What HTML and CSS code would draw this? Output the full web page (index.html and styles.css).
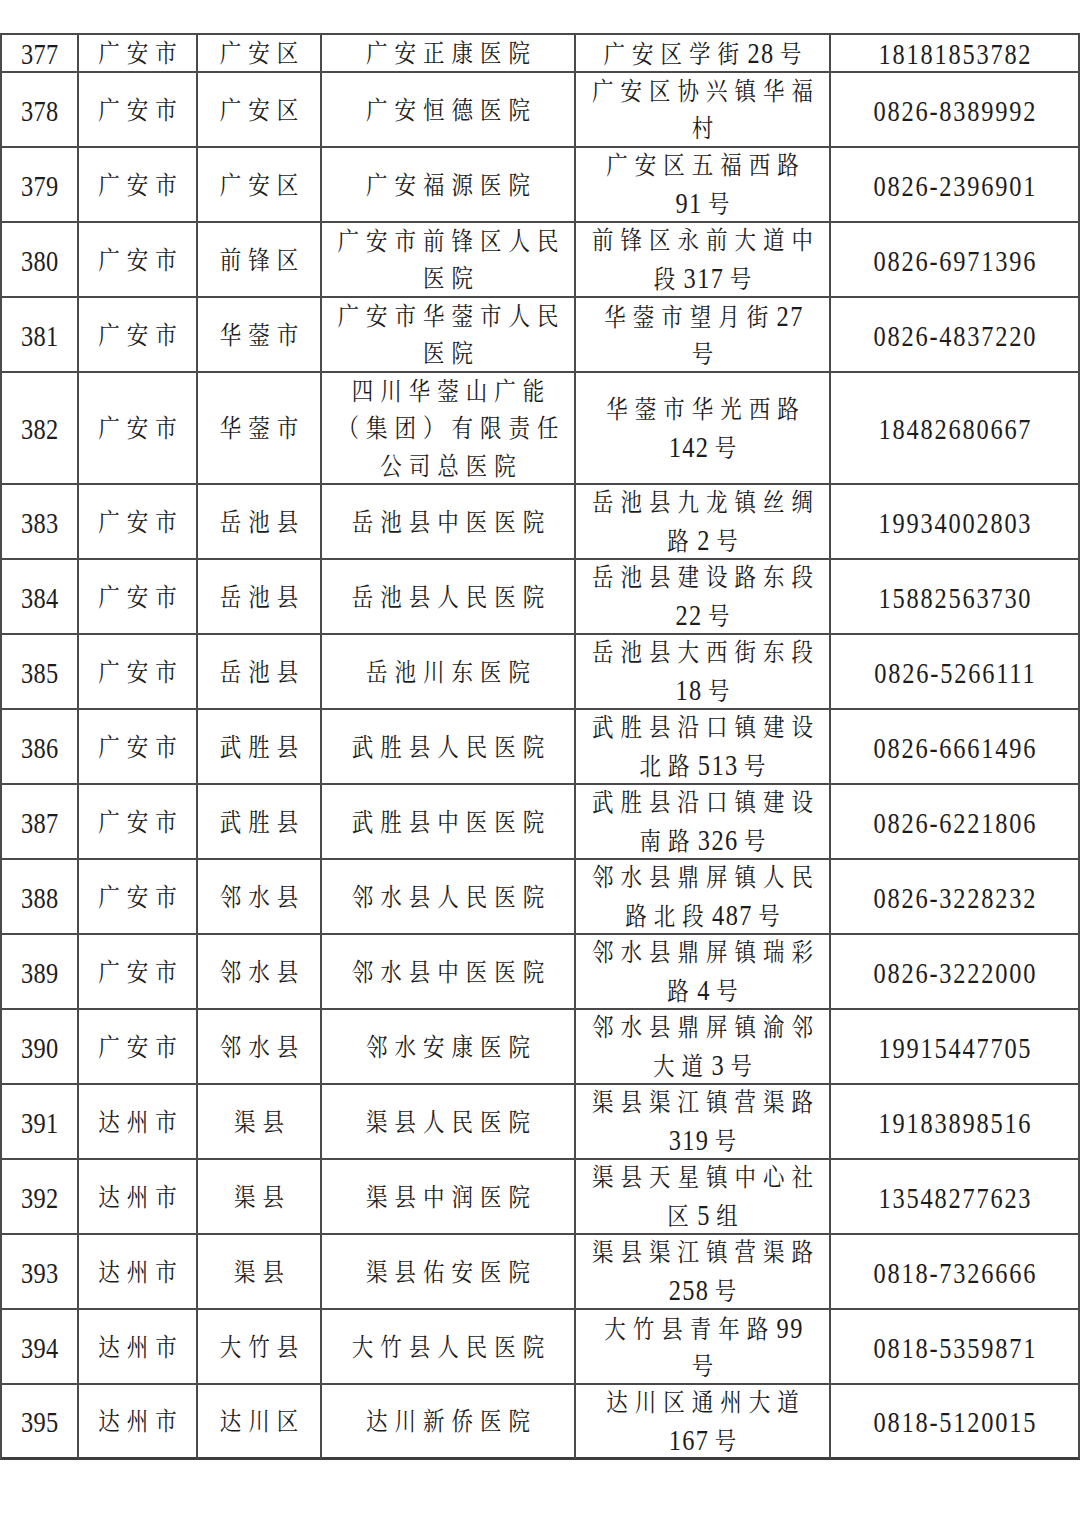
FILE: index.html
```html
<!DOCTYPE html>
<html lang="zh-CN">
<head>
<meta charset="utf-8">
<title>医院名单</title>
<link rel="stylesheet" href="styles.css">
</head>
<body>
<div class="table">
  <div class="row r1"><div class="c num"><p>377</p></div><div class="c"><p>广安市</p></div><div class="c"><p>广安区</p></div><div class="c"><p>广安正康医院</p></div><div class="c"><p>广安区学街 <span class="n">28</span> 号</p></div><div class="c tel"><p>18181853782</p></div></div>
  <div class="row"><div class="c num"><p>378</p></div><div class="c"><p>广安市</p></div><div class="c"><p>广安区</p></div><div class="c"><p>广安恒德医院</p></div><div class="c"><p>广安区协兴镇华福<br>村</p></div><div class="c tel"><p>0826-8389992</p></div></div>
  <div class="row"><div class="c num"><p>379</p></div><div class="c"><p>广安市</p></div><div class="c"><p>广安区</p></div><div class="c"><p>广安福源医院</p></div><div class="c"><p>广安区五福西路<br><span class="n">91</span> 号</p></div><div class="c tel"><p>0826-2396901</p></div></div>
  <div class="row"><div class="c num"><p>380</p></div><div class="c"><p>广安市</p></div><div class="c"><p>前锋区</p></div><div class="c"><p>广安市前锋区人民<br>医院</p></div><div class="c"><p>前锋区永前大道中<br>段 <span class="n">317</span> 号</p></div><div class="c tel"><p>0826-6971396</p></div></div>
  <div class="row"><div class="c num"><p>381</p></div><div class="c"><p>广安市</p></div><div class="c"><p>华蓥市</p></div><div class="c"><p>广安市华蓥市人民<br>医院</p></div><div class="c"><p>华蓥市望月街 <span class="n">27</span><br>号</p></div><div class="c tel"><p>0826-4837220</p></div></div>
  <div class="row r3"><div class="c num"><p>382</p></div><div class="c"><p>广安市</p></div><div class="c"><p>华蓥市</p></div><div class="c"><p>四川华蓥山广能<br>（集团）有限责任<br>公司总医院</p></div><div class="c"><p>华蓥市华光西路<br><span class="n">142</span> 号</p></div><div class="c tel"><p>18482680667</p></div></div>
  <div class="row"><div class="c num"><p>383</p></div><div class="c"><p>广安市</p></div><div class="c"><p>岳池县</p></div><div class="c"><p>岳池县中医医院</p></div><div class="c"><p>岳池县九龙镇丝绸<br>路 <span class="n">2</span> 号</p></div><div class="c tel"><p>19934002803</p></div></div>
  <div class="row"><div class="c num"><p>384</p></div><div class="c"><p>广安市</p></div><div class="c"><p>岳池县</p></div><div class="c"><p>岳池县人民医院</p></div><div class="c"><p>岳池县建设路东段<br><span class="n">22</span> 号</p></div><div class="c tel"><p>15882563730</p></div></div>
  <div class="row"><div class="c num"><p>385</p></div><div class="c"><p>广安市</p></div><div class="c"><p>岳池县</p></div><div class="c"><p>岳池川东医院</p></div><div class="c"><p>岳池县大西街东段<br><span class="n">18</span> 号</p></div><div class="c tel"><p>0826-5266111</p></div></div>
  <div class="row"><div class="c num"><p>386</p></div><div class="c"><p>广安市</p></div><div class="c"><p>武胜县</p></div><div class="c"><p>武胜县人民医院</p></div><div class="c"><p>武胜县沿口镇建设<br>北路 <span class="n">513</span> 号</p></div><div class="c tel"><p>0826-6661496</p></div></div>
  <div class="row"><div class="c num"><p>387</p></div><div class="c"><p>广安市</p></div><div class="c"><p>武胜县</p></div><div class="c"><p>武胜县中医医院</p></div><div class="c"><p>武胜县沿口镇建设<br>南路 <span class="n">326</span> 号</p></div><div class="c tel"><p>0826-6221806</p></div></div>
  <div class="row"><div class="c num"><p>388</p></div><div class="c"><p>广安市</p></div><div class="c"><p>邻水县</p></div><div class="c"><p>邻水县人民医院</p></div><div class="c"><p>邻水县鼎屏镇人民<br>路北段 <span class="n">487</span> 号</p></div><div class="c tel"><p>0826-3228232</p></div></div>
  <div class="row"><div class="c num"><p>389</p></div><div class="c"><p>广安市</p></div><div class="c"><p>邻水县</p></div><div class="c"><p>邻水县中医医院</p></div><div class="c"><p>邻水县鼎屏镇瑞彩<br>路 <span class="n">4</span> 号</p></div><div class="c tel"><p>0826-3222000</p></div></div>
  <div class="row"><div class="c num"><p>390</p></div><div class="c"><p>广安市</p></div><div class="c"><p>邻水县</p></div><div class="c"><p>邻水安康医院</p></div><div class="c"><p>邻水县鼎屏镇渝邻<br>大道 <span class="n">3</span> 号</p></div><div class="c tel"><p>19915447705</p></div></div>
  <div class="row"><div class="c num"><p>391</p></div><div class="c"><p>达州市</p></div><div class="c"><p>渠县</p></div><div class="c"><p>渠县人民医院</p></div><div class="c"><p>渠县渠江镇营渠路<br><span class="n">319</span> 号</p></div><div class="c tel"><p>19183898516</p></div></div>
  <div class="row"><div class="c num"><p>392</p></div><div class="c"><p>达州市</p></div><div class="c"><p>渠县</p></div><div class="c"><p>渠县中润医院</p></div><div class="c"><p>渠县天星镇中心社<br>区 <span class="n">5</span> 组</p></div><div class="c tel"><p>13548277623</p></div></div>
  <div class="row"><div class="c num"><p>393</p></div><div class="c"><p>达州市</p></div><div class="c"><p>渠县</p></div><div class="c"><p>渠县佑安医院</p></div><div class="c"><p>渠县渠江镇营渠路<br><span class="n">258</span> 号</p></div><div class="c tel"><p>0818-7326666</p></div></div>
  <div class="row"><div class="c num"><p>394</p></div><div class="c"><p>达州市</p></div><div class="c"><p>大竹县</p></div><div class="c"><p>大竹县人民医院</p></div><div class="c"><p>大竹县青年路 <span class="n">99</span><br>号</p></div><div class="c tel"><p>0818-5359871</p></div></div>
  <div class="row last"><div class="c num"><p>395</p></div><div class="c"><p>达州市</p></div><div class="c"><p>达川区</p></div><div class="c"><p>达川新侨医院</p></div><div class="c"><p>达川区通州大道<br><span class="n">167</span> 号</p></div><div class="c tel"><p>0818-5120015</p></div></div>
</div>
</body>
</html>
```
FILE: styles.css
```css
html, body {
  margin: 0;
  padding: 0;
  background: #ffffff;
}

body {
  width: 1080px;
  height: 1529px;
  overflow: hidden;
  font-family: "Liberation Serif", "Noto Serif CJK SC", "Noto Sans CJK SC", serif;
  color: #1c1c1c;
}

.table {
  margin-top: 33px;
  width: 1080px;
  box-sizing: border-box;
  border-top: 2px solid #4a4a4a;
  border-left: 2px solid #4a4a4a;
}

.row {
  display: grid;
  grid-template-columns: 77px 119px 124px 254px 255px 249px;
  height: 75px;
}

.row.r1 {
  height: 38px;
}

.row.r3 {
  height: 112px;
}

.c {
  box-sizing: border-box;
  border-right: 2px solid #4a4a4a;
  border-bottom: 2px solid #4a4a4a;
  padding-top: 4px;
  display: flex;
  align-items: center;
  justify-content: center;
  overflow: hidden;
}

.c p {
  margin: 0;
  text-align: center;
  font-size: 21.5px;
  font-weight: 400;
  letter-spacing: 7px;
  word-spacing: -11px;
  padding-left: 7px;
  line-height: 31.4px;
  white-space: nowrap;
  transform: scaleY(1.18);
}

.row.last .c {
  border-bottom: 3px solid #3c3c3c;
}

.n {
  font-family: "Liberation Serif", serif;
  font-size: 24.4px;
  letter-spacing: 1.4px;
  margin-right: 4px;
}

.c.num p {
  font-family: "Liberation Serif", serif;
  font-size: 24.4px;
  letter-spacing: 0.3px;
  padding-left: 0.3px;
  word-spacing: 0;
}

.c.tel p {
  font-family: "Liberation Serif", serif;
  font-size: 24.4px;
  letter-spacing: 1.8px;
  padding-left: 1.8px;
  word-spacing: 0;
}
```
